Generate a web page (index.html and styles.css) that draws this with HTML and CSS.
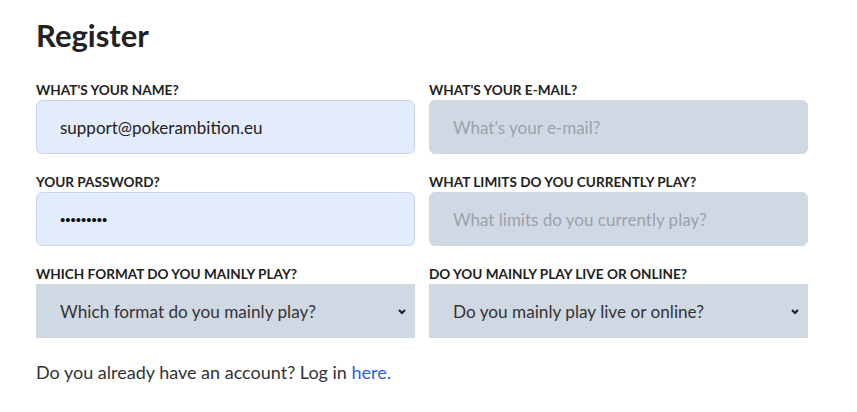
FILE: index.html
```html
<!DOCTYPE html>
<html>
<head>
<meta charset="utf-8">
<link rel="stylesheet" href="styles.css">
</head>
<body>
<main class="page">
  <h1 class="title">Register</h1>
  <form class="form">
    <div class="field">
      <label class="label">What's your name?</label>
      <input class="input input-filled" type="text" value="support@pokerambition.eu">
    </div>
    <div class="field">
      <label class="label">What's your e-mail?</label>
      <input class="input input-empty" type="text" placeholder="What's your e-mail?">
    </div>
    <div class="field">
      <label class="label">Your password?</label>
      <input class="input input-filled input-password" type="password" value="abcdefghi">
    </div>
    <div class="field">
      <label class="label">What limits do you currently play?</label>
      <input class="input input-empty" type="text" placeholder="What limits do you currently play?">
    </div>
    <div class="field">
      <label class="label">Which format do you mainly play?</label>
      <div class="select">
        <span>Which format do you mainly play?</span>
        <svg class="chev" width="10" height="7" viewBox="0 0 10 7"><path d="M2 2 L5 5 L8 2" fill="none" stroke="#222" stroke-width="2.2"/></svg>
      </div>
    </div>
    <div class="field">
      <label class="label">Do you mainly play live or online?</label>
      <div class="select">
        <span>Do you mainly play live or online?</span>
        <svg class="chev" width="10" height="7" viewBox="0 0 10 7"><path d="M2 2 L5 5 L8 2" fill="none" stroke="#222" stroke-width="2.2"/></svg>
      </div>
    </div>
  </form>
  <p class="foot">Do you already have an account? Log in <a class="link" href="#">here.</a></p>
</main>
</body>
</html>
```

FILE: styles.css
```css
html, body {
  margin: 0;
  padding: 0;
  background: #fff;
}
body {
  font-family: "Lato", "Open Sans", sans-serif;
  color: #222;
}
.page {
  padding: 17px 49px 0 36px;
}
.title {
  margin: 0 0 30px 0;
  font-size: 31px;
  font-weight: 700;
  color: #222;
  line-height: 36px;
}
.form {
  display: grid;
  grid-template-columns: 379px 379px;
  column-gap: 14px;
  row-gap: 21px;
}
.field {
  display: flex;
  flex-direction: column;
}
.label {
  font-size: 13.6px;
  font-weight: 700;
  text-transform: uppercase;
  color: #222;
  line-height: 15px;
  margin-bottom: 2px;
}
.input {
  box-sizing: border-box;
  height: 54px;
  border-radius: 6px;
  padding: 0 23px;
  font-family: inherit;
  font-size: 17px;
  outline: none;
}
.input-filled {
  background: #e3ecfc;
  border: 1px solid #c9d7ee;
  color: #222;
}
.input-password {
  font-family: "Liberation Sans", sans-serif;
  font-size: 15px;
  color: #111;
}
.input-empty {
  background: #d0d9e3;
  border: 1px solid #d0d9e3;
  color: #222;
}
.input-empty::placeholder {
  color: #9aa2ab;
}
.select {
  box-sizing: border-box;
  height: 54px;
  background: #d0d9e3;
  display: flex;
  align-items: center;
  justify-content: space-between;
  padding: 0 8px 0 24px;
  font-size: 17.2px;
  color: #333;
}
.chev {
  display: block;
}
.foot {
  margin: 23px 0 0 0;
  font-size: 18px;
  color: #333;
}
.link {
  color: #2a5ee8;
  text-decoration: none;
}
```
